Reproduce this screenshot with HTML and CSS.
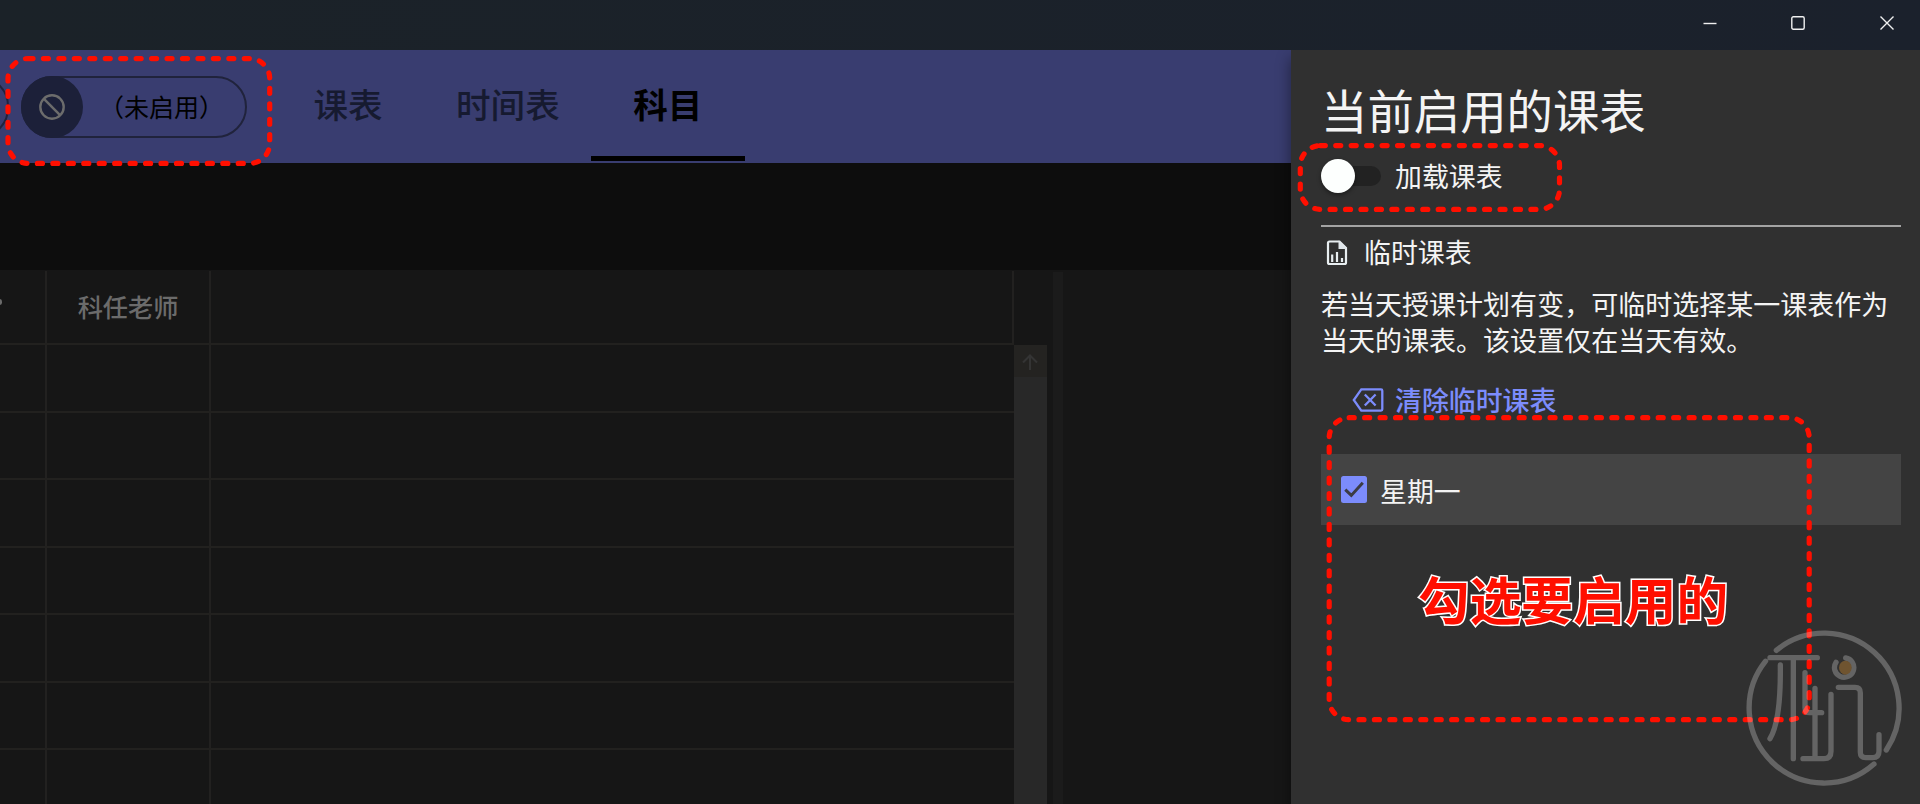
FILE: index.html
```html
<!DOCTYPE html>
<html lang="zh-CN">
<head>
<meta charset="utf-8">
<title>课表</title>
<link rel="stylesheet" href="styles.css">
</head>
<body>
<div class="window">
  <header class="titlebar">
    <span class="winbtn"><svg width="14" height="14" viewBox="0 0 14 14"><path d="M0.5 7.5H13.5"/></svg></span>
    <span class="winbtn"><svg width="14" height="14" viewBox="0 0 14 14"><rect x="0.8" y="0.8" width="12.4" height="12.4" rx="1.5"/></svg></span>
    <span class="winbtn"><svg width="14" height="14" viewBox="0 0 14 14"><path d="M0.5 0.5L13.5 13.5M13.5 0.5L0.5 13.5"/></svg></span>
  </header>
  <div class="body">
    <main class="main">
      <nav class="appbar">
        <span class="chip-prev"></span>
        <div class="chip">
          <span class="chip-icon"><svg width="26" height="26" viewBox="0 0 26 26"><circle cx="13" cy="13" r="11.7"/><path d="M4.7 4.7L21.3 21.3"/></svg></span>
          <span class="chip-text">（未启用）</span>
        </div>
        <div class="tabs">
          <a class="tab">课表</a>
          <a class="tab">时间表</a>
          <a class="tab active">科目</a>
        </div>
      </nav>
      <div class="toolbar"></div>
      <section class="content">
        <div class="table">
          <div class="row head"><span class="cell clipped"><i class="dot"></i></span><span class="cell">科任老师</span><span class="cell last"></span></div>
          <div class="row"><span class="cell"></span><span class="cell"></span><span class="cell"></span></div>
          <div class="row"><span class="cell"></span><span class="cell"></span><span class="cell"></span></div>
          <div class="row"><span class="cell"></span><span class="cell"></span><span class="cell"></span></div>
          <div class="row"><span class="cell"></span><span class="cell"></span><span class="cell"></span></div>
          <div class="row"><span class="cell"></span><span class="cell"></span><span class="cell"></span></div>
          <div class="row"><span class="cell"></span><span class="cell"></span><span class="cell"></span></div>
          <div class="row"><span class="cell"></span><span class="cell"></span><span class="cell"></span></div>
        </div>
        <div class="scrollbar">
          <span class="scroll-up"><svg width="16" height="16" viewBox="0 0 16 16"><path d="M8 16V1.5M1 8.5L8 1.5L15 8.5"/></svg></span>
        </div>
        <div class="splitter"></div>
      </section>
    </main>
    <aside class="panel">
      <h1 class="title">当前启用的课表</h1>
      <div class="toggle-row">
        <span class="switch"><i class="knob"></i></span>
        <span>加载课表</span>
      </div>
      <div class="divider"></div>
      <div class="section-head">
        <svg width="22" height="26" viewBox="0 0 22 26"><path class="line" d="M3.5 1.5H13.5L20 8V22.5Q20 24 18.5 24H3.5Q2 24 2 22.5V3Q2 1.5 3.5 1.5Z"/><path class="fill" d="M12.5 0.5L21 9H12.5Z"/><path class="line" d="M6.2 14.5V22M11 12V22M16 18V22"/></svg>
        <span>临时课表</span>
      </div>
      <p class="desc">若当天授课计划有变，可临时选择某一课表作为当天的课表。该设置仅在当天有效。</p>
      <div class="clear">
        <svg width="32" height="24" viewBox="0 0 32 24"><path d="M9.3 1.4H29Q30.3 1.4 30.3 2.7V21.3Q30.3 22.6 29 22.6H9.3L1.8 12Z"/><path d="M12.8 6.5L23.6 17.5M23.6 6.5L12.8 17.5"/></svg>
        <span>清除临时课表</span>
      </div>
      <div class="option">
        <span class="check"><svg width="26" height="27" viewBox="0 0 26 27"><path d="M4.3 13.6L10.3 19.4L21.8 6.8"/></svg></span>
        <span class="option-text">星期一</span>
      </div>
    </aside>
  </div>
  <svg class="marks" width="1920" height="804" viewBox="0 0 1920 804">
    <rect x="8" y="58.6" width="261.7" height="104.8" rx="20"/>
    <rect x="1300.3" y="145.6" width="259.2" height="63.8" rx="20"/>
    <rect x="1329.2" y="417.7" width="480" height="302" rx="20"/>
  </svg>
  <div class="caption">勾选要启用的</div>
  <svg class="watermark" width="200" height="194" viewBox="0 0 600 582">
    <g class="ink">
      <path d="M169 121A225 225 0 0 1 499 420M461.9 462.3A225 225 0 0 1 136.7 153.6M150 143H292M220 143V446M181 165C182 250 178 340 150 386M255 188V293Q255 308 268 308H305M285 235V446M333 253V424Q333 446 312 446H249M355 232H405Q421 232 421 248V427Q421 443 437 443H458Q477 443 477 424V374M377 144A29 29 0 1 1 348 157"/>
    </g>
    <ellipse class="bead" cx="376" cy="173" rx="19" ry="21"/>
  </svg>
</div>
</body>
</html>
```
FILE: styles.css
```css
* { box-sizing: border-box; }
body {
  margin: 0;
  background: #161616;
  font-family: "Noto Sans CJK SC", "Noto Sans", sans-serif;
  color: #f4f4f4;
}
svg { display: block; flex: none; fill: none; }
.window {
  position: relative;
  width: 1920px;
  height: 804px;
  overflow: hidden;
  display: flex;
  flex-direction: column;
}
.titlebar {
  height: 50px;
  flex: none;
  display: flex;
  justify-content: flex-end;
  background: linear-gradient(90deg, #1b2228, #1b212c);
}
.winbtn {
  width: 88.5px;
  height: 45px;
  flex: none;
  display: flex;
  align-items: center;
  justify-content: center;
}
.winbtn:last-child { margin-right: -11px; }
.winbtn svg { stroke: #f0f0f0; stroke-width: 1.4; }
.body { flex: 1; display: flex; min-height: 0; }
.main {
  width: 1290.5px;
  flex: none;
  display: flex;
  flex-direction: column;
  overflow: hidden;
}
.appbar {
  height: 113px;
  flex: none;
  display: flex;
  align-items: center;
  background: #393d70;
}
.chip-prev {
  width: 60px;
  height: 62px;
  margin-left: -51px;
  border: 2px solid #20233c;
  border-radius: 31px;
  flex: none;
}
.chip {
  width: 226px;
  height: 62px;
  margin-left: 12px;
  border: 2px solid #20233c;
  border-radius: 31px;
  display: flex;
  align-items: center;
  color: #000;
  flex: none;
}
.chip-icon {
  width: 62px;
  height: 62px;
  margin-left: -2px;
  border-radius: 50%;
  background: #1c2039;
  display: flex;
  align-items: center;
  justify-content: center;
}
.chip-icon svg { stroke: #6c6c6c; stroke-width: 2.4; }
.chip-text { margin: -2px 0 0 16px; font-size: 25px; line-height: 36px; white-space: nowrap; }
.tabs { display: flex; height: 113px; margin-left: 24px; }
.tab {
  min-width: 154px;
  height: 111px;
  padding: 0 31px;
  border-bottom: 5px solid transparent;
  font-size: 34.6px;
  font-weight: 500;
  line-height: 106px;
  text-align: center;
  color: #161a30;
}
.tab.active { color: #000; font-weight: 700; border-bottom-color: #000; }
.toolbar { height: 107px; flex: none; background: #0d0d0d; }
.content { flex: 1; display: flex; background: #161616; min-height: 0; }
.table { width: 1014px; flex: none; padding-top: 1px; }
.row {
  display: grid;
  grid-template-columns: 47px 164px 803px;
  height: 67.5px;
  border-bottom: 2px solid #22211f;
}
.row.head { height: 74px; }
.cell {
  border-right: 2px solid #222120;
  display: flex;
  align-items: center;
  justify-content: center;
  color: #6b6b6b;
  font-size: 25.2px;
  font-weight: 500;
  padding-bottom: 2px;
}
.cell.clipped { justify-content: flex-start; padding-bottom: 10px; }
.dot { width: 5px; height: 6px; margin-left: -3px; border-radius: 3px; background: #6b6b6b; }
.row:not(.head) .cell:last-child { border-right: 0; }
.scrollbar { width: 33px; margin-top: 75px; background: #282828; flex: none; }
.scroll-up {
  height: 32px;
  background: #242321;
  display: flex;
  align-items: center;
  justify-content: center;
}
.scroll-up svg { stroke: #343434; stroke-width: 2; margin: 2px 0 0 -2px; }
.splitter { width: 10px; margin: 2px 0 0 6px; background: #1b1b1b; flex: none; }
.panel {
  flex: 1;
  position: relative;
  padding: 29px 19px 0 30.5px;
  background: #303030;
  box-shadow: 0 8px 14px rgba(0, 0, 0, .45);
  clip-path: inset(0 0 0 -20px);
  font-size: 26.9px;
  line-height: 36px;
  white-space: nowrap;
}
.title { margin: 0; font-size: 46.4px; font-weight: 400; line-height: 60px; }
.toggle-row { height: 69px; margin-top: 2px; display: flex; align-items: center; gap: 14px; }
.switch {
  width: 60px;
  height: 20px;
  border-radius: 10px;
  background: #222;
  display: flex;
  align-items: center;
}
.knob {
  width: 34px;
  height: 34px;
  flex: none;
  border-radius: 50%;
  background: #fdfffe;
  box-shadow: 0 2px 4px rgba(0, 0, 0, .4);
}
.divider { height: 2px; margin-top: 14.5px; background: #a3a3a3; }
.section-head {
  height: 53px;
  padding-left: 5px;
  display: flex;
  align-items: center;
  gap: 16px;
}
.section-head span { margin-top: -2px; }
.section-head .line { stroke: #e8eef0; stroke-width: 2.2; }
.section-head .fill { fill: #dfe6ea; }
.desc { margin: 6px 0 0; white-space: normal; font-size: 27.03px; line-height: 36px; width: 580px; }
.clear {
  height: 50px;
  margin-top: 17px;
  padding-left: 31px;
  display: flex;
  align-items: center;
  gap: 11px;
  color: #7c8cfc;
  font-weight: 500;
}
.clear svg { stroke: #7c8cfc; stroke-width: 2.3; }
.option {
  height: 71px;
  margin-top: 29px;
  padding-left: 20px;
  display: flex;
  align-items: center;
  gap: 13px;
  background: #444;
}
.option-text { margin-top: 4px; }
.check { width: 26px; height: 27px; border-radius: 2.5px; background: #7c8cfc; }
.check svg { stroke: #3c3c44; stroke-width: 3; }
.marks {
  position: absolute;
  left: 0;
  top: 0;
  stroke: #ff0f00;
  stroke-width: 5.2;
  stroke-linecap: round;
  stroke-dasharray: 5 10.45;
}
.caption {
  position: absolute;
  left: 1418px;
  top: 558px;
  font-size: 51.7px;
  line-height: 80px;
  font-weight: 700;
  color: #ff0f00;
  -webkit-text-stroke: 3px #fff;
  paint-order: stroke fill;
  white-space: nowrap;
}
.watermark { position: absolute; left: 1719.5px; top: 610px; }
.ink { stroke: #fff; stroke-width: 16; stroke-linecap: round; opacity: .25; }
.bead { fill: #6f5430; }
```
